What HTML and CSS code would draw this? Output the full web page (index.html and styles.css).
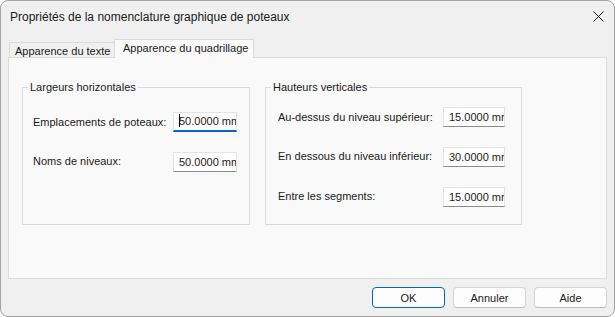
FILE: index.html
```html
<!DOCTYPE html>
<html lang="fr">
<head>
    <meta charset="UTF-8">
    <meta name="viewport" content="width=device-width, initial-scale=1.0">
    <title>Propriétés de la nomenclature graphique de poteaux</title>
    <link rel="stylesheet" href="styles.css">
</head>
<body>
    <div class="dialog">
        <div class="titlebar">
            <span class="title">Propriétés de la nomenclature graphique de poteaux</span>
            <span class="close">
                <svg width="11" height="11" viewBox="0 0 11 11">
                    <path d="M0.5 0.5 L10.5 10.5 M10.5 0.5 L0.5 10.5" stroke="#1a1a1a" stroke-width="1" fill="none"/>
                </svg>
            </span>
        </div>

        <div class="tabs">
            <div class="tab">Apparence du texte</div>
            <div class="tab active">Apparence du quadrillage</div>
        </div>

        <div class="panel">
            <fieldset class="group group-left">
                <legend>Largeurs horizontales</legend>
                <div class="row">
                    <span class="label">Emplacements de poteaux:</span>
                    <div class="field focused"><span class="caret"></span>50.0000 mm</div>
                </div>
                <div class="row">
                    <span class="label raised">Noms de niveaux:</span>
                    <div class="field">50.0000 mm</div>
                </div>
            </fieldset>

            <fieldset class="group group-right">
                <legend>Hauteurs verticales</legend>
                <div class="row">
                    <span class="label">Au-dessus du niveau supérieur:</span>
                    <div class="field">15.0000 mm</div>
                </div>
                <div class="row">
                    <span class="label raised">En dessous du niveau inférieur:</span>
                    <div class="field">30.0000 mm</div>
                </div>
                <div class="row">
                    <span class="label raised">Entre les segments:</span>
                    <div class="field">15.0000 mm</div>
                </div>
            </fieldset>
        </div>

        <div class="footer">
            <button class="btn default">OK</button>
            <button class="btn">Annuler</button>
            <button class="btn">Aide</button>
        </div>
    </div>
</body>
</html>
```

FILE: styles.css
```css
body {
    margin: 0;
    font-family: "Liberation Sans", Arial, sans-serif;
    font-size: 11px;
    color: #1a1a1a;
    background: #ffffff;
}
.dialog {
    width: 615px;
    height: 317px;
    box-sizing: border-box;
    border: 1px solid #a3a3a3;
    border-radius: 8px;
    background: #f0f0f0;
    overflow: hidden;
    display: flex;
    flex-direction: column;
}
.titlebar {
    height: 31px;
    display: flex;
    align-items: center;
    justify-content: space-between;
    padding-left: 9px;
    flex-shrink: 0;
}
.title {
    font-size: 12px;
}
.close {
    width: 30px;
    height: 30px;
    display: flex;
    align-items: center;
    justify-content: center;
    margin-right: 1px;
}
.tabs {
    display: flex;
    align-items: flex-end;
    padding: 7px 0 0 8px;
    height: 19px;
    flex-shrink: 0;
}
.tab {
    width: 106px;
    height: 16px;
    box-sizing: border-box;
    border: 1px solid #d9d9d9;
    border-bottom: none;
    background: #f0f0f0;
    padding-left: 5px;
    line-height: 16px;
    white-space: nowrap;
}
.tab.active {
    position: relative;
    z-index: 1;
    width: 140px;
    height: 19px;
    margin-left: -1px;
    padding-left: 8px;
    line-height: 16px;
    background: #f9f9f9;
}
.panel {
    margin: -1px 7px 0 7px;
    height: 222px;
    box-sizing: border-box;
    border: 1px solid #dcdcdc;
    background: #f9f9f9;
    display: flex;
    gap: 15px;
    padding: 21px 0 0 13px;
    flex-shrink: 0;
}
.group {
    margin: 0;
    min-width: 0;
    box-sizing: border-box;
    height: 146px;
    border: 1px solid #dadada;
    display: flex;
    flex-direction: column;
    gap: 20px;
}
.group legend {
    padding: 0 2px;
    line-height: 16px;
}
.group-left {
    width: 228px;
    padding: 17px 12px 0 10px;
}
.group-left legend {
    margin-left: -5px;
}
.group-right {
    width: 257px;
    padding: 12px 16px 0 12px;
}
.group-right legend {
    margin-left: -7px;
}
.row {
    display: flex;
    align-items: center;
    justify-content: space-between;
    height: 20px;
}
.label.raised {
    margin-top: -3px;
}
.field {
    width: 64px;
    height: 20px;
    box-sizing: border-box;
    background: #ffffff;
    border: 1px solid #e3e3e3;
    border-bottom-color: #8c8c8c;
    padding-left: 5px;
    line-height: 18px;
    white-space: nowrap;
    overflow: hidden;
}
.group-right .field {
    width: 62px;
}
.field.focused {
    border-bottom: 2px solid #0067c0;
    line-height: 17px;
}
.caret {
    display: inline-block;
    width: 1px;
    height: 13px;
    background: #000000;
    vertical-align: -2px;
    margin-right: -1px;
}
.footer {
    display: flex;
    justify-content: flex-end;
    gap: 8px;
    padding: 8px 7px 0 0;
}
.btn {
    width: 73px;
    height: 21px;
    box-sizing: border-box;
    border: 1px solid #d3d3d3;
    border-bottom-color: #bdbdbd;
    border-radius: 4px;
    background: #fdfdfd;
    font-family: inherit;
    font-size: 11px;
    color: #1a1a1a;
    padding: 0;
}
.btn.default {
    border-color: #0067c0;
}
```
